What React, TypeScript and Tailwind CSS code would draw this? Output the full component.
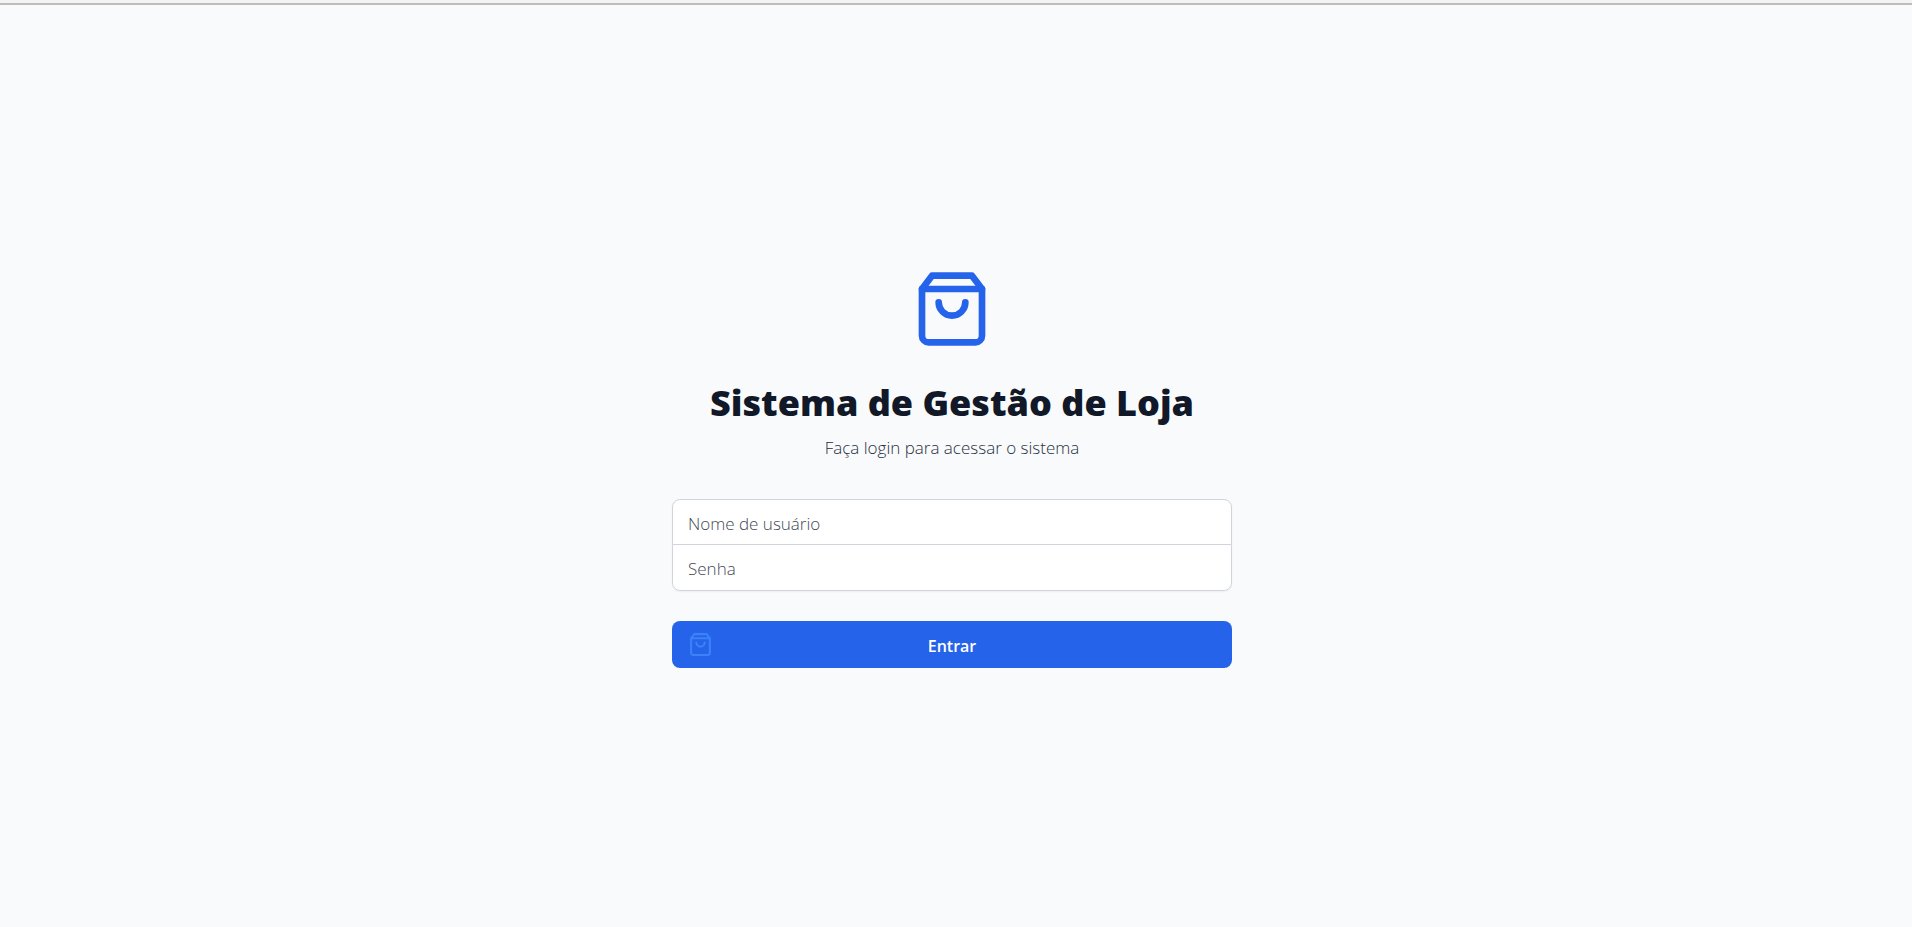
import type { FormEvent } from 'react';

function BagIcon({ className }: { className: string }) {
  return (
    <svg
      viewBox="0 0 24 24"
      fill="none"
      stroke="currentColor"
      strokeWidth="2"
      strokeLinecap="round"
      strokeLinejoin="round"
      aria-hidden="true"
      className={className}
    >
      <path d="M6 2 3 6v14a2 2 0 0 0 2 2h14a2 2 0 0 0 2-2V6l-3-4Z" />
      <path d="M3 6h18" />
      <path d="M16 10a4 4 0 0 1-8 0" />
    </svg>
  );
}

const fieldClass =
  "relative block w-full border border-[#d1d5db] bg-white px-[15px] pt-[2px] text-[17px] leading-[25px] font-light text-[#111827] placeholder:text-[#434956] focus:z-10 focus:border-[#3b82f6] focus:outline-none";

export default function App() {
  const handleSubmit = (event: FormEvent<HTMLFormElement>) => event.preventDefault();

  return (
    <div className="flex min-h-screen flex-col bg-[#f9fafc] font-['Open_Sans','Noto_Sans',sans-serif]">
      <div className="h-[5px] border-b-2 border-[#bdbdbd] bg-[#f3f3f3]" />
      <main className="flex flex-1 items-center justify-center pt-[5px] pr-7 pl-5">
        <div className="w-full max-w-[560px]">
          <BagIcon className="mx-auto size-20 text-[#2563eb]" />
          <h1 className="mt-[30px] text-center text-[36px] leading-[48px] font-extrabold text-[#111827]">
            Sistema de Gestão de Loja
          </h1>
          <p className="mt-[7px] text-center text-[17px] leading-[27px] font-light text-[#263040]">
            Faça login para acessar o sistema
          </p>
          <form className="mt-[38px]" onSubmit={handleSubmit}>
            <div className="rounded-lg shadow-xs">
              <input
                name="username"
                type="text"
                aria-label="Nome de usuário"
                placeholder="Nome de usuário"
                className={`${fieldClass} h-[46px] rounded-t-lg`}
              />
              <input
                name="password"
                type="password"
                aria-label="Senha"
                placeholder="Senha"
                className={`${fieldClass} -mt-px h-[47px] rounded-b-lg`}
              />
            </div>
            <button
              type="submit"
              className="relative mt-[30px] flex h-[47px] w-full cursor-pointer items-center justify-center rounded-lg bg-[#2563eb] px-5 pt-1 text-[16px] leading-[25px] font-semibold text-white hover:bg-[#1d4ed8]"
            >
              <span className="absolute inset-y-0 left-0 flex items-center pl-4">
                <BagIcon className="size-[25px] text-[#3b82f6]" />
              </span>
              Entrar
            </button>
          </form>
        </div>
      </main>
    </div>
  );
}
